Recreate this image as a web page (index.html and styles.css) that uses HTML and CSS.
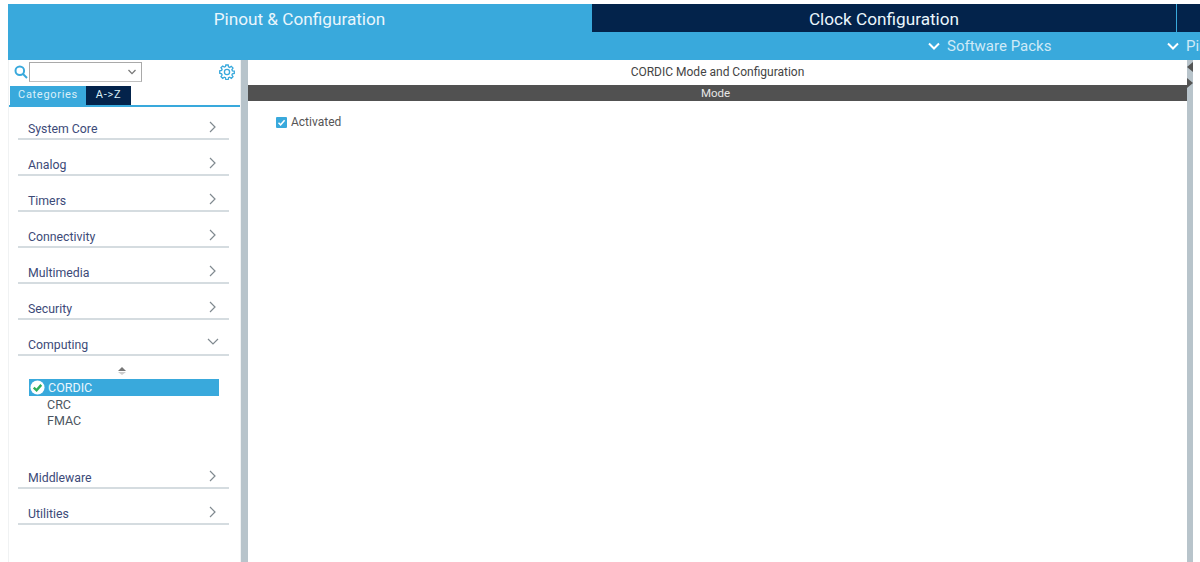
FILE: index.html
```html
<!DOCTYPE html>
<html lang="en">
<head>
<meta charset="utf-8">
<title>Pinout &amp; Configuration</title>
<link rel="stylesheet" href="styles.css">
</head>
<body>
<div class="app">
  <header class="header">
    <nav class="tabs">
      <div class="tab tab-active">Pinout &amp; Configuration</div>
      <div class="tab tab-dark">Clock Configuration</div>
      <div class="tab tab-stub"></div>
    </nav>
    <div class="subbar">
      <div class="menu menu-packs">
        <svg class="menu-chev" viewBox="0 0 12 8"><path d="M1 1.5 6 6.5 11 1.5"/></svg>
        <span>Software Packs</span>
      </div>
      <div class="menu menu-pinout">
        <svg class="menu-chev" viewBox="0 0 12 8"><path d="M1 1.5 6 6.5 11 1.5"/></svg>
        <span>Pinout</span>
      </div>
    </div>
  </header>
  <div class="body">
    <aside class="sidebar">
      <div class="search">
        <svg class="search-icon" viewBox="0 0 14 14"><circle cx="5.8" cy="5.8" r="4.3"/><path d="M9 9 13 13"/></svg>
        <div class="combo">
          <svg class="combo-chev" viewBox="0 0 8 6"><path d="M.5 1 4 4.6 7.5 1"/></svg>
        </div>
        <svg class="gear" viewBox="0 0 16 16">
          <circle cx="8" cy="8" r="2.6"/>
          <path d="M6.8 1h2.4l.3 1.9 1.2.5 1.6-1.1 1.7 1.7-1.1 1.6.5 1.2 1.9.3v2.4l-1.9.3-.5 1.2 1.1 1.6-1.7 1.7-1.6-1.1-1.2.5-.3 1.9H6.800l-.3-1.900-1.200-.5-1.600 1.100-1.700-1.700 1.100-1.600-.5-1.200L.7 9.200V6.800l1.900-.3.5-1.200-1.100-1.600 1.700-1.700 1.600 1.100 1.200-.5z"/>
        </svg>
      </div>
      <div class="mode-tabs">
        <div class="mode mode-on">Categories</div>
        <div class="mode mode-off">A-&gt;Z</div>
      </div>
      <div class="categories">
        <div class="cat"><span>System Core</span><svg class="chev" viewBox="0 0 7 12"><path d="M1 1 6 6 1 11"/></svg></div>
        <div class="cat"><span>Analog</span><svg class="chev" viewBox="0 0 7 12"><path d="M1 1 6 6 1 11"/></svg></div>
        <div class="cat"><span>Timers</span><svg class="chev" viewBox="0 0 7 12"><path d="M1 1 6 6 1 11"/></svg></div>
        <div class="cat"><span>Connectivity</span><svg class="chev" viewBox="0 0 7 12"><path d="M1 1 6 6 1 11"/></svg></div>
        <div class="cat"><span>Multimedia</span><svg class="chev" viewBox="0 0 7 12"><path d="M1 1 6 6 1 11"/></svg></div>
        <div class="cat"><span>Security</span><svg class="chev" viewBox="0 0 7 12"><path d="M1 1 6 6 1 11"/></svg></div>
        <div class="cat"><span>Computing</span><svg class="chev-down" viewBox="0 0 12 7"><path d="M1 1 6 6 11 1"/></svg></div>
        <div class="expanded">
          <div class="sorter"><span class="sort-up"></span><span class="sort-down"></span></div>
          <div class="item item-on">
            <svg class="ok" viewBox="0 0 16 16"><circle cx="8" cy="8" r="7.500"/><path d="M4 8.200 7 11 12 5.200"/></svg>
            <span>CORDIC</span>
          </div>
          <div class="item">CRC</div>
          <div class="item">FMAC</div>
        </div>
        <div class="cat"><span>Middleware</span><svg class="chev" viewBox="0 0 7 12"><path d="M1 1 6 6 1 11"/></svg></div>
        <div class="cat"><span>Utilities</span><svg class="chev" viewBox="0 0 7 12"><path d="M1 1 6 6 1 11"/></svg></div>
      </div>
    </aside>
    <div class="splitter"></div>
    <main class="main">
      <div class="main-title">CORDIC Mode and Configuration</div>
      <div class="mode-bar">Mode</div>
      <label class="activated">
        <svg class="check" viewBox="0 0 11 11"><rect width="11" height="11" rx="1"/><path d="M2.500 5.700 4.600 7.800 8.600 3.200"/></svg>
        <span>Activated</span>
      </label>
    </main>
    <div class="edge">
      <span class="edge-left"></span>
      <span class="edge-right"></span>
    </div>
  </div>
</div>
</body>
</html>
```
FILE: styles.css
```css
* { box-sizing: border-box; }
html, body { margin: 0; height: 100%; background: #fff; overflow: hidden; }
body { font-family: "Roboto", "Liberation Sans", sans-serif; }
.app { width: 1200px; height: 562px; padding: 4px 0 0 8px; display: flex; flex-direction: column; }

.header { background: #39a9dc; height: 56px; flex: none; }
.tabs { display: flex; height: 28px; gap: 1px; }
.tab { color: #eaf6fc; font-size: 17.2px; display: flex; align-items: center; justify-content: center; padding-top: 2px; }
.tab-active { width: 583px; background: #39a9dc; }
.tab-dark { width: 584px; background: #03234b; }
.tab-stub { flex: 1; background: #03234b; }

.subbar { height: 28px; display: flex; color: #cfeaf7; font-size: 15px; overflow: hidden; }
.menu { display: flex; align-items: center; gap: 7px; white-space: nowrap; }
.menu-packs { margin-left: 920px; width: 239px; flex: none; }
.menu-chev { width: 12px; height: 8px; fill: none; stroke: #fff; stroke-width: 2; }

.body { flex: 1; display: flex; min-height: 0; }
.sidebar { width: 233px; flex: none; background: #fff; border-left: 1px solid #f0f2f3; border-right: 1px solid #f0f2f3; }
.search { height: 26px; display: flex; align-items: center; padding-left: 5px; }
.search-icon { width: 14px; height: 14px; fill: none; stroke: #39a9dc; stroke-width: 2; margin-right: 1px; margin-top: -2px; }
.combo { width: 113px; height: 20px; border: 1px solid #a9a9a9; border-bottom-color: #c0c0c0; background: #fff; display: flex; align-items: center; justify-content: flex-end; padding-right: 5px; margin-top: -2px; }
.combo-chev { width: 8px; height: 6px; fill: none; stroke: #777; stroke-width: 1.300; }
.gear { width: 16px; height: 16px; margin-left: 77px; margin-top: -3px; fill: none; stroke: #39a9dc; stroke-width: 1.300; }

.mode-tabs { display: flex; height: 21px; padding-left: 1px; border-bottom: 2px solid #39a9dc; }
.mode { height: 19px; font-size: 11px; display: flex; align-items: center; justify-content: center; letter-spacing: .7px; color: #d9eff9; padding-bottom: 2px; }
.mode-on { width: 76px; background: #39a9dc; }
.mode-off { width: 45px; background: #03234b; }

.categories { padding: 0 11px 0 9px; }
.cat { height: 36px; border-bottom: 2px solid #d5dce0; display: flex; align-items: flex-end; justify-content: space-between; padding: 0 13px 1px 10px; font-size: 12.300px; color: #3c4a78; }
.cat:first-child { height: 33px; }
.cat span { line-height: 16px; }
.chev { width: 7px; height: 12px; fill: none; stroke: #808a90; stroke-width: 1.200; margin-bottom: 4px; }
.chev-down { width: 12px; height: 7px; fill: none; stroke: #808a90; stroke-width: 1.200; margin-bottom: 8px; margin-right: -3px; }

.expanded { height: 97px; padding: 0 10px 0 11px; font-size: 12.500px; color: #4b5560; }
.sorter { height: 23px; display: flex; flex-direction: column; align-items: center; justify-content: center; gap: 1px; padding-top: 7px; padding-right: 4px; }
.sort-up { width: 0; height: 0; border: 4px solid transparent; border-top: 0; border-bottom: 4px solid #777; }
.sort-down { width: 0; height: 0; border: 4px solid transparent; border-bottom: 0; border-top: 3px solid #ccc; }
.item { height: 16px; line-height: 16px; padding-left: 18px; }
.item-on { height: 17px; line-height: 17px; background: #39a9dc; color: #eaf6fc; padding-left: 1px; display: flex; align-items: center; gap: 3px; margin-bottom: 1px; }
.ok { width: 15px; height: 15px; flex: none; }
.ok circle { fill: #fff; }
.ok path { fill: none; stroke: #2fae5a; stroke-width: 2.600; }

.splitter { width: 7px; flex: none; background: #b8c4cb; }
.main { width: 939px; flex: none; background: #fff; display: flex; flex-direction: column; }
.main-title { height: 25px; font-size: 12px; color: #444; display: flex; align-items: center; justify-content: center; padding-bottom: 1px; }
.mode-bar { height: 16px; background: #515151; color: #e6e6e6; font-size: 11.500px; display: flex; align-items: center; justify-content: center; padding-right: 4px; }
.activated { display: flex; align-items: center; gap: 4px; margin: 14px 0 0 28px; font-size: 12px; color: #555; }
.check { width: 11px; height: 11px; }
.check rect { fill: #39a9dc; }
.check path { fill: none; stroke: #fff; stroke-width: 1.500; }

.edge { width: 6px; flex: none; background: #b8c4cb; display: flex; flex-direction: column; align-items: center; gap: 6px; padding-top: 2px; }
.edge-left { width: 0; height: 0; border: 5px solid transparent; border-left: 0; border-right: 6px solid #555; }
.edge-right { width: 0; height: 0; border: 5px solid transparent; border-right: 0; border-left: 6px solid #555; }
```
